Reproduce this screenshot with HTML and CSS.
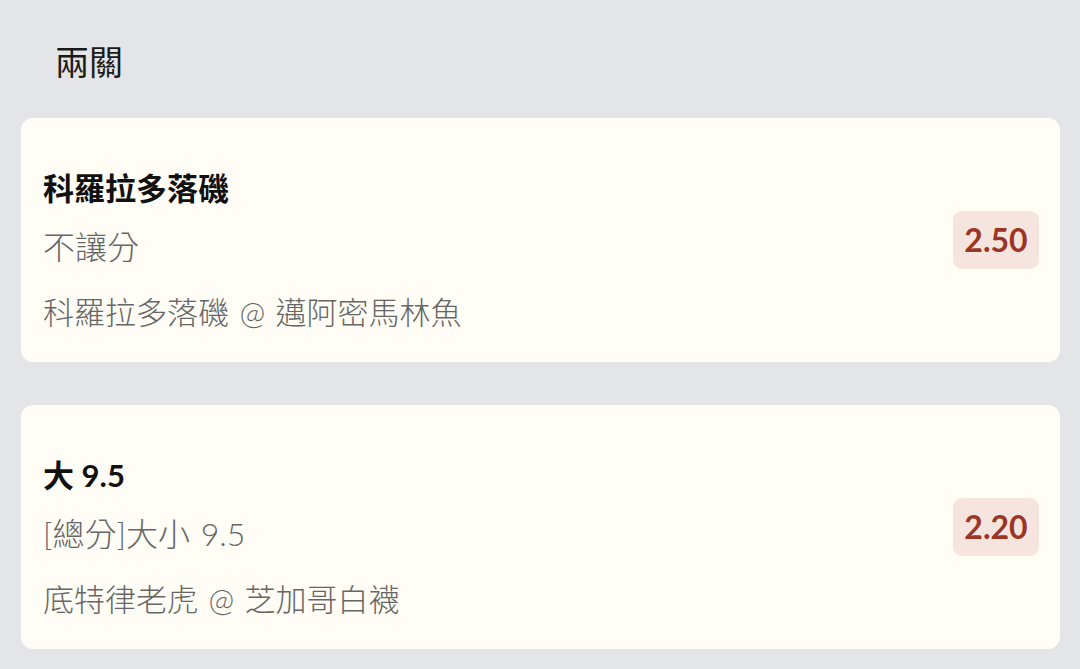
FILE: index.html
```html
<!DOCTYPE html>
<html lang="zh-Hant">
<head>
    <meta charset="UTF-8">
    <meta name="viewport" content="width=device-width, initial-scale=1.0">
    <title>兩關</title>
    <link rel="stylesheet" href="styles.css">
</head>
<body>
    <h1 class="page-title">兩關</h1>

    <div class="bet-list">
        <div class="bet-card">
            <div class="bet-info">
                <div class="bet-pick">科羅拉多落磯</div>
                <div class="bet-market">不讓分</div>
                <div class="bet-match">科羅拉多落磯 @ 邁阿密馬林魚</div>
            </div>
            <div class="bet-odds">2.50</div>
        </div>

        <div class="bet-card">
            <div class="bet-info">
                <div class="bet-pick">大 9.5</div>
                <div class="bet-market">[總分]大小 9.5</div>
                <div class="bet-match">底特律老虎 @ 芝加哥白襪</div>
            </div>
            <div class="bet-odds">2.20</div>
        </div>
    </div>
</body>
</html>
```

FILE: styles.css
```css
body {
    margin: 0;
    padding: 0;
    background: #e4e5e8;
    font-family: 'Lato', 'Noto Sans CJK TC', sans-serif;
    color: #111;
    height: 100vh;
    overflow: hidden;
}
.page-title {
    font-size: 34px;
    font-weight: normal;
    line-height: 44px;
    margin: 0;
    padding: 40px 0 34px 55px;
    color: #1a1a1a;
}
.bet-list {
    display: flex;
    flex-direction: column;
    gap: 43px;
    padding: 0 20px 0 21px;
}
.bet-card {
    background: #fffdf6;
    border-radius: 12px;
    height: 244px;
    box-sizing: border-box;
    padding: 50px 21px 0 22px;
    display: flex;
    justify-content: space-between;
    align-items: flex-start;
}
.bet-info {
    display: flex;
    flex-direction: column;
}
.bet-pick {
    font-size: 31px;
    font-weight: bold;
    line-height: 40px;
    color: #111;
}
.bet-market,
.bet-match {
    font-size: 31px;
    font-weight: 300;
    line-height: 40px;
    color: #666;
    word-spacing: 2px;
}
.bet-market {
    font-size: 32px;
    margin-top: 19px;
}
.bet-match {
    margin-top: 25px;
}
.bet-odds {
    align-self: center;
    margin-top: -50px;
    width: 86px;
    height: 58px;
    line-height: 58px;
    text-align: center;
    background: #f6e5de;
    border-radius: 9px;
    color: #9b3526;
    font-size: 32px;
    font-weight: bold;
}
```
